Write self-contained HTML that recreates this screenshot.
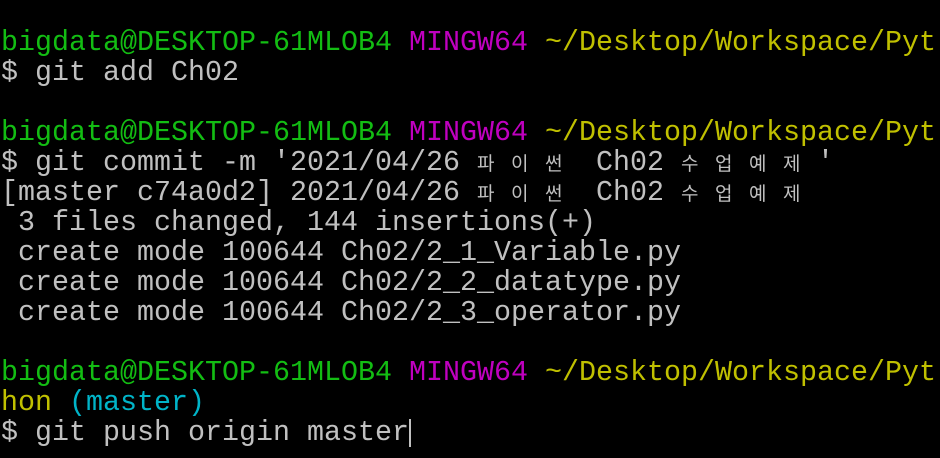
<!DOCTYPE html>
<html><head><meta charset="utf-8"><style>
html,body{margin:0;padding:0;background:#000;width:940px;height:458px;overflow:hidden}
.t{position:absolute;left:1px;top:28px;font-family:"Liberation Mono","DejaVu Sans Mono",monospace;font-size:28.33px;line-height:30px;color:#c0c0c0;white-space:pre}
.g{color:#13bd13}.m{color:#c000c0}.y{color:#c0c000}.c{color:#00b4c8}
.k{display:inline-block;width:17px;font-family:"Noto Sans CJK KR","NanumGothic",sans-serif;font-size:19px;text-align:center;vertical-align:top}
.cur{display:inline-block;width:2px;height:28px;background:#c0c0c0;vertical-align:top;margin-top:1px}
</style></head><body>
<div class="t"><span class="g">bigdata@DESKTOP-61MLOB4</span> <span class="m">MINGW64</span> <span class="y">~/Desktop/Workspace/Pyt</span>
$ git add Ch02

<span class="g">bigdata@DESKTOP-61MLOB4</span> <span class="m">MINGW64</span> <span class="y">~/Desktop/Workspace/Pyt</span>
$ git commit -m '2021/04/26 <span class="k">파</span> <span class="k">이</span> <span class="k">썬</span>  Ch02 <span class="k">수</span> <span class="k">업</span> <span class="k">예</span> <span class="k">제</span> '
[master c74a0d2] 2021/04/26 <span class="k">파</span> <span class="k">이</span> <span class="k">썬</span>  Ch02 <span class="k">수</span> <span class="k">업</span> <span class="k">예</span> <span class="k">제</span>
 3 files changed, 144 insertions(+)
 create mode 100644 Ch02/2_1_Variable.py
 create mode 100644 Ch02/2_2_datatype.py
 create mode 100644 Ch02/2_3_operator.py

<span class="g">bigdata@DESKTOP-61MLOB4</span> <span class="m">MINGW64</span> <span class="y">~/Desktop/Workspace/Pyt</span>
<span class="y">hon</span> <span class="c">(master)</span>
$ git push origin master<span class="cur"></span></div>
</body></html>
